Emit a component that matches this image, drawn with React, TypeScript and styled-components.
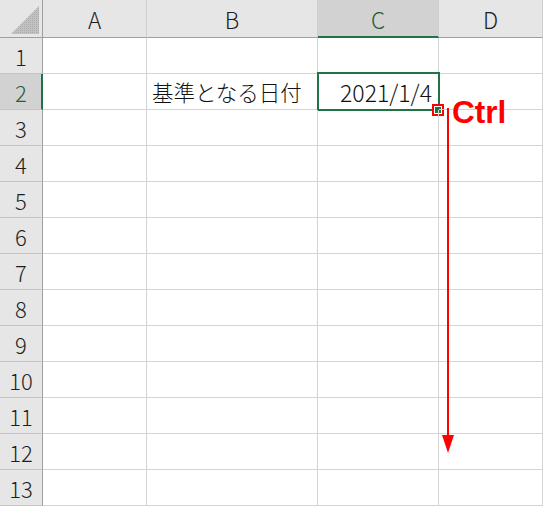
import React from "react";
import styled, { createGlobalStyle, css } from "styled-components";

const GlobalStyle = createGlobalStyle`
  html, body {
    margin: 0;
    padding: 0;
    background: #ffffff;
  }
  body {
    font-family: "Noto Sans CJK JP", "Noto Sans", sans-serif;
  }
`;

const GREEN = "#217346";
const HEADER_BG = "#e6e6e6";
const HEADER_SEL_BG = "#d2d2d2";
const GRID = "#d4d4d4";
const HEADER_EDGE = "#9f9f9f";

const Sheet = styled.div`
  position: relative;
  display: grid;
  grid-template-columns: 43px 104px 171px 121px 104px;
  grid-template-rows: 38px;
  grid-auto-rows: 36px;
  width: 543px;
  overflow: hidden;
`;

const Corner = styled.div`
  box-sizing: border-box;
  background: ${HEADER_BG};
  border-right: 1px solid ${HEADER_EDGE};
  border-bottom: 1px solid ${HEADER_EDGE};
`;

const CornerMark = styled.svg`
  display: block;
`;

const ColHeader = styled.div<{ $selected?: boolean }>`
  box-sizing: border-box;
  display: flex;
  align-items: center;
  justify-content: center;
  font-size: 22.5px;
  font-weight: 300;
  color: #1f1f1f;
  background: ${HEADER_BG};
  border-right: 1px solid #d0d0d0;
  border-bottom: 1px solid ${HEADER_EDGE};
  padding-top: 1px;
  ${(p) =>
    p.$selected &&
    css`
      background: ${HEADER_SEL_BG};
      color: #1d5e3a;
      border-bottom: 2px solid ${GREEN};
      padding-top: 2px;
    `}
`;

const RowHeader = styled.div<{ $selected?: boolean }>`
  box-sizing: border-box;
  display: flex;
  align-items: center;
  justify-content: center;
  font-size: 22px;
  font-weight: 300;
  color: #1f1f1f;
  background: ${HEADER_BG};
  border-right: 1px solid ${HEADER_EDGE};
  border-bottom: 1px solid #c4c4c4;
  ${(p) =>
    p.$selected &&
    css`
      background: ${HEADER_SEL_BG};
      color: #1d5e3a;
      border-right: 2px solid ${GREEN};
      padding-left: 1px;
    `}
`;

const Cell = styled.div<{ $align?: "left" | "right" }>`
  box-sizing: border-box;
  position: relative;
  display: flex;
  align-items: center;
  justify-content: ${(p) => (p.$align === "right" ? "flex-end" : "flex-start")};
  padding: 0 6px 0 5px;
  font-size: 21.5px;
  font-weight: 300;
  color: #111111;
  white-space: nowrap;
  border-right: 1px solid ${GRID};
  border-bottom: 1px solid ${GRID};
`;

const NumberValue = styled.span`
  font-size: 23px;
`;

const SelectionBox = styled.div`
  position: absolute;
  left: -1px;
  top: -2px;
  width: 123px;
  height: 39px;
  box-sizing: border-box;
  border: 2px solid ${GREEN};
  pointer-events: none;
`;

const FillHandle = styled.div`
  position: absolute;
  right: -6px;
  bottom: -7px;
  width: 12px;
  height: 12px;
  box-sizing: border-box;
  border: 2px solid #ff0000;
  background: #ffffff;
  padding: 1px;
  display: flex;
`;

const FillDot = styled.div`
  flex: 1;
  background: ${GREEN};
`;

const ArrowSvg = styled.svg`
  position: absolute;
  left: 440px;
  top: 104px;
  overflow: visible;
`;

const CtrlLabel = styled.div`
  position: absolute;
  left: 452px;
  top: 97px;
  font-family: "Liberation Sans", Arial, sans-serif;
  font-weight: 700;
  font-size: 31.5px;
  line-height: 1;
  color: #ff0000;
`;

const columns = ["A", "B", "C", "D"];
const rows = Array.from({ length: 13 }, (_, i) => i + 1);

export default function App() {
  return (
    <>
      <GlobalStyle />
      <Sheet>
        <Corner>
          <CornerMark width="42" height="37" viewBox="0 0 42 37">
            <defs>
              <pattern id="dots" width="2" height="2" patternUnits="userSpaceOnUse">
                <rect width="2" height="2" fill="#c2c2c2" />
                <rect width="1" height="1" fill="#aaaaaa" />
              </pattern>
            </defs>
            <polygon points="11,34 39,34 39,6" fill="url(#dots)" />
          </CornerMark>
        </Corner>
        {columns.map((c) => (
          <ColHeader key={c} $selected={c === "C"}>
            {c}
          </ColHeader>
        ))}
        {rows.map((r) => (
          <React.Fragment key={r}>
            <RowHeader $selected={r === 2}>{r}</RowHeader>
            <Cell />
            <Cell>{r === 2 ? "基準となる日付" : null}</Cell>
            <Cell $align="right">
              {r === 2 ? (
                <>
                  <NumberValue>2021/1/4</NumberValue>
                  <SelectionBox>
                    <FillHandle>
                      <FillDot />
                    </FillHandle>
                  </SelectionBox>
                </>
              ) : null}
            </Cell>
            <Cell />
          </React.Fragment>
        ))}
        <ArrowSvg width="16" height="350" viewBox="0 0 16 350">
          <rect x="7" y="4" width="2" height="330" fill="#ff0000" />
          <polygon points="2,331 14,331 8,349" fill="#ff0000" />
        </ArrowSvg>
        <CtrlLabel>Ctrl</CtrlLabel>
      </Sheet>
    </>
  );
}
